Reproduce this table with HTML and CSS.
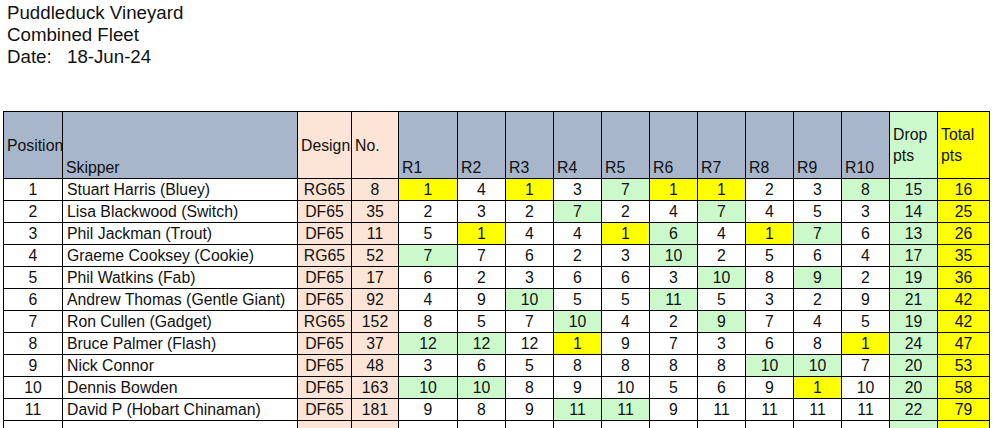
FILE: index.html
```html
<!DOCTYPE html>
<html>
<head>
<meta charset="utf-8">
<link rel="stylesheet" href="styles.css">
</head>
<body>
<div class="title">
  <div>Puddleduck Vineyard</div>
  <div>Combined Fleet</div>
  <div><span class="date-label">Date:</span>18-Jun-24</div>
</div>
<table class="results">
  <colgroup>
    <col class="c-pos"><col class="c-skip"><col class="c-design"><col class="c-no">
    <col class="c-r1"><col class="c-r"><col class="c-r"><col class="c-r"><col class="c-r">
    <col class="c-r"><col class="c-r"><col class="c-r"><col class="c-r"><col class="c-r">
    <col class="c-drop"><col class="c-total">
  </colgroup>
  <thead>
    <tr>
      <th class="h-blue h-mid">Position</th>
      <th class="h-blue h-bot">Skipper</th>
      <th class="h-peach h-mid">Design</th>
      <th class="h-peach h-mid">No.</th>
      <th class="h-blue h-bot">R1</th>
      <th class="h-blue h-bot">R2</th>
      <th class="h-blue h-bot">R3</th>
      <th class="h-blue h-bot">R4</th>
      <th class="h-blue h-bot">R5</th>
      <th class="h-blue h-bot">R6</th>
      <th class="h-blue h-bot">R7</th>
      <th class="h-blue h-bot">R8</th>
      <th class="h-blue h-bot">R9</th>
      <th class="h-blue h-bot">R10</th>
      <th class="h-green h-mid">Drop<br>pts</th>
      <th class="h-yellow h-mid">Total<br>pts</th>
    </tr>
  </thead>
  <tbody>
    <tr><td>1</td><td class="name">Stuart Harris (Bluey)</td><td class="peach">RG65</td><td class="peach">8</td><td class="y">1</td><td>4</td><td class="y">1</td><td>3</td><td class="g">7</td><td class="y">1</td><td class="y">1</td><td>2</td><td>3</td><td class="g">8</td><td class="g">15</td><td class="y">16</td></tr>
    <tr><td>2</td><td class="name">Lisa Blackwood (Switch)</td><td class="peach">DF65</td><td class="peach">35</td><td>2</td><td>3</td><td>2</td><td class="g">7</td><td>2</td><td>4</td><td class="g">7</td><td>4</td><td>5</td><td>3</td><td class="g">14</td><td class="y">25</td></tr>
    <tr><td>3</td><td class="name">Phil Jackman (Trout)</td><td class="peach">DF65</td><td class="peach">11</td><td>5</td><td class="y">1</td><td>4</td><td>4</td><td class="y">1</td><td class="g">6</td><td>4</td><td class="y">1</td><td class="g">7</td><td>6</td><td class="g">13</td><td class="y">26</td></tr>
    <tr><td>4</td><td class="name">Graeme Cooksey (Cookie)</td><td class="peach">RG65</td><td class="peach">52</td><td class="g">7</td><td>7</td><td>6</td><td>2</td><td>3</td><td class="g">10</td><td>2</td><td>5</td><td>6</td><td>4</td><td class="g">17</td><td class="y">35</td></tr>
    <tr><td>5</td><td class="name">Phil Watkins (Fab)</td><td class="peach">DF65</td><td class="peach">17</td><td>6</td><td>2</td><td>3</td><td>6</td><td>6</td><td>3</td><td class="g">10</td><td>8</td><td class="g">9</td><td>2</td><td class="g">19</td><td class="y">36</td></tr>
    <tr><td>6</td><td class="name">Andrew Thomas (Gentle Giant)</td><td class="peach">DF65</td><td class="peach">92</td><td>4</td><td>9</td><td class="g">10</td><td>5</td><td>5</td><td class="g">11</td><td>5</td><td>3</td><td>2</td><td>9</td><td class="g">21</td><td class="y">42</td></tr>
    <tr><td>7</td><td class="name">Ron Cullen (Gadget)</td><td class="peach">RG65</td><td class="peach">152</td><td>8</td><td>5</td><td>7</td><td class="g">10</td><td>4</td><td>2</td><td class="g">9</td><td>7</td><td>4</td><td>5</td><td class="g">19</td><td class="y">42</td></tr>
    <tr><td>8</td><td class="name">Bruce Palmer (Flash)</td><td class="peach">DF65</td><td class="peach">37</td><td class="g">12</td><td class="g">12</td><td>12</td><td class="y">1</td><td>9</td><td>7</td><td>3</td><td>6</td><td>8</td><td class="y">1</td><td class="g">24</td><td class="y">47</td></tr>
    <tr><td>9</td><td class="name">Nick Connor</td><td class="peach">DF65</td><td class="peach">48</td><td>3</td><td>6</td><td>5</td><td>8</td><td>8</td><td>8</td><td>8</td><td class="g">10</td><td class="g">10</td><td>7</td><td class="g">20</td><td class="y">53</td></tr>
    <tr><td>10</td><td class="name">Dennis Bowden</td><td class="peach">DF65</td><td class="peach">163</td><td class="g">10</td><td class="g">10</td><td>8</td><td>9</td><td>10</td><td>5</td><td>6</td><td>9</td><td class="y">1</td><td>10</td><td class="g">20</td><td class="y">58</td></tr>
    <tr><td>11</td><td class="name">David P (Hobart Chinaman)</td><td class="peach">DF65</td><td class="peach">181</td><td>9</td><td>8</td><td>9</td><td class="g">11</td><td class="g">11</td><td>9</td><td>11</td><td>11</td><td>11</td><td>11</td><td class="g">22</td><td class="y">79</td></tr>
    <tr><td></td><td class="name"></td><td class="peach"></td><td class="peach"></td><td></td><td></td><td></td><td></td><td></td><td></td><td></td><td></td><td></td><td></td><td class="g"></td><td class="y"></td></tr>
  </tbody>
</table>
</body>
</html>
```
FILE: styles.css
```css
html, body {
  margin: 0;
  padding: 0;
  background: #ffffff;
}

body {
  font-family: "Liberation Sans", Arial, sans-serif;
  color: #111111;
  overflow: hidden;
}

.title {
  padding: 2px 0 0 7px;
  font-size: 18.7px;
  line-height: 22px;
}

.date-label {
  display: inline-block;
  width: 60px;
}

.results {
  margin: 43px 0 0 3px;
  border-collapse: collapse;
  table-layout: fixed;
  width: 986px;
  font-size: 15.8px;
}

.c-pos { width: 59px; }
.c-skip { width: 235px; }
.c-design { width: 54px; }
.c-no { width: 47px; }
.c-r1 { width: 59px; }
.c-r { width: 48px; }
.c-drop { width: 48px; }
.c-total { width: 52px; }

.results th,
.results td {
  border: 1px solid #000000;
  padding: 0;
  white-space: nowrap;
  overflow: visible;
}

.results th {
  font-weight: normal;
  text-align: left;
  height: 66px;
  line-height: 21px;
  padding: 0 0 0 3px;
}

.h-mid { vertical-align: middle; }
.h-bot { vertical-align: bottom; }

.h-blue { background: #a7b6ca; }
.h-peach { background: #fce4d6; }
.h-green { background: #ccf9cc; }
.h-yellow { background: #ffff00; }

.results td {
  height: 21px;
  line-height: 21px;
  text-align: center;
  vertical-align: middle;
}

.results td.name {
  text-align: left;
  padding-left: 4px;
}

.peach { background: #fce4d6; }
.g { background: #ccf9cc; }
.y { background: #ffff00; }
```
